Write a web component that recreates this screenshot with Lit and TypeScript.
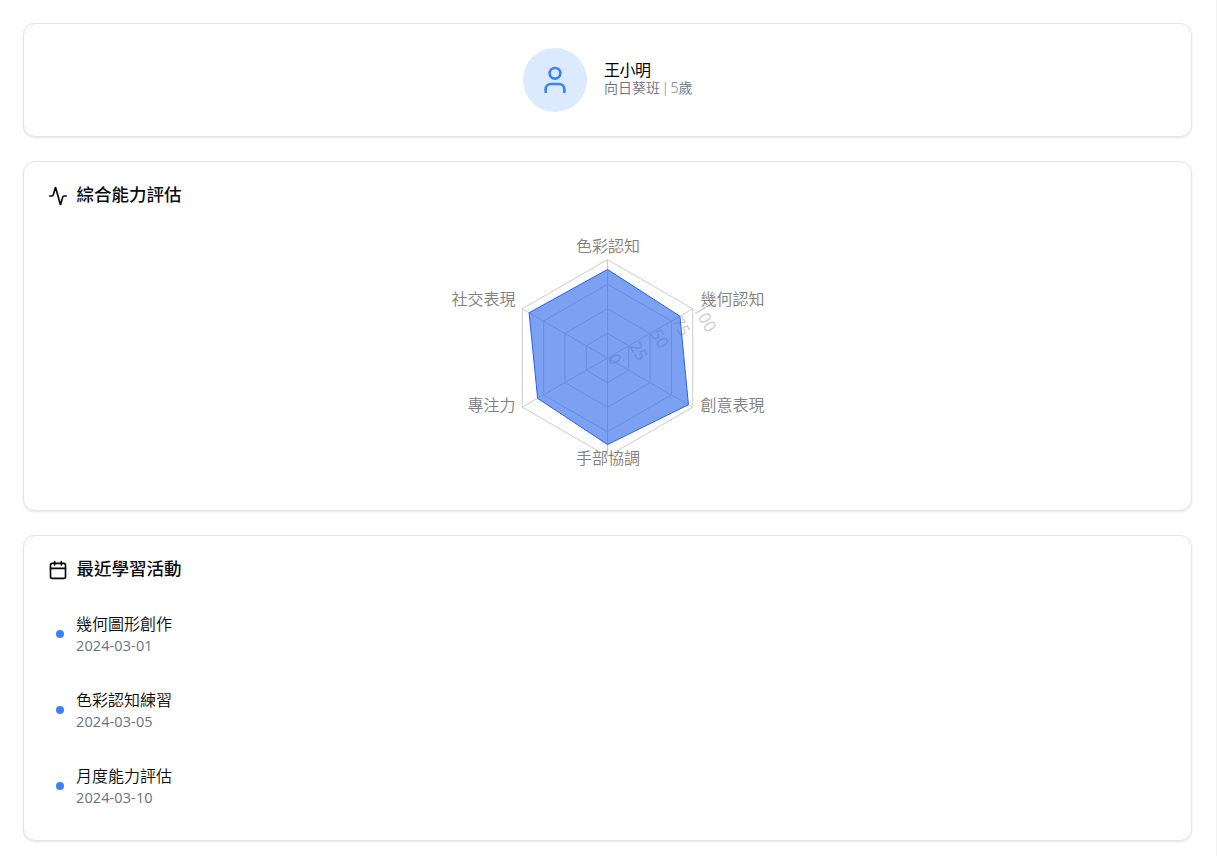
import { LitElement, html, svg, css } from "lit";
import { customElement } from "lit/decorators.js";

const SKILLS = [
  { name: "色彩認知", value: 90, x: 607.5, y: 251.5, anchor: "middle" },
  { name: "幾何認知", value: 85, x: 700, y: 304.5, anchor: "start" },
  { name: "創意表現", value: 95, x: 700, y: 410.5, anchor: "start" },
  { name: "手部協調", value: 88, x: 607.5, y: 463.5, anchor: "middle" },
  { name: "專注力", value: 82, x: 515, y: 410.5, anchor: "end" },
  { name: "社交表現", value: 92, x: 515, y: 304.5, anchor: "end" },
];
const ACTIVITIES = [
  { title: "幾何圖形創作", date: "2024-03-01" },
  { title: "色彩認知練習", date: "2024-03-05" },
  { title: "月度能力評估", date: "2024-03-10" },
];
const CX = 607;
const CY = 358;
const R = 98.4;
const point = (i: number, v: number) => {
  const a = (-90 + i * 60) * Math.PI / 180;
  const r = R * v / 100;
  return `${(CX + r * Math.cos(a)).toFixed(2)},${(CY + r * Math.sin(a)).toFixed(2)}`;
};
const ring = (v: number) => SKILLS.map((_, i) => point(i, v)).join(" ");

@customElement("app-root")
export class AppRoot extends LitElement {
  static styles = css`
    :host { display: block; box-sizing: border-box; width: 100%; height: 856px; overflow: hidden; background: #fff; border-right: 1px solid #f1f1f1; font-family: "Open Sans", "Noto Sans CJK TC", sans-serif; color: #09090b; }
    * { box-sizing: border-box; }
    .page { display: flex; flex-direction: column; gap: 24px; padding: 23px 24px 0 23px; }
    .card { border: 1px solid #e4e4e7; border-radius: 12px; background: #fff; box-shadow: 0 1px 2px rgba(0,0,0,.1); }
    .profile { height: 114px; display: flex; align-items: center; justify-content: center; gap: 17px; }
    .avatar { width: 64px; height: 64px; border-radius: 50%; background: #dbeafe; color: #3b82f6; display: flex; align-items: center; justify-content: center; }
    .name { font: 400 16px/19px "Noto Sans CJK TC", sans-serif; letter-spacing: -.5px; margin-top: -4px; color: #000; }
    .meta { width: 88px; font: 350 14px/18px "Open Sans", "Noto Sans CJK TC", sans-serif; color: #6b7280; white-space: nowrap; word-spacing: -2.2px; }
    .skills { height: 350px; }
    .recent { height: 306px; }
    .head { display: flex; align-items: center; gap: 8.5px; padding: 24px 24px 0; height: 44px; }
    .head h3 { margin: -4px 0 0; font: 500 17.5px/20px "Noto Sans CJK TC", sans-serif; }
    svg { display: block; flex: none; }
    .icon { fill: none; stroke: currentColor; stroke-width: 2; stroke-linecap: round; stroke-linejoin: round; }
    .chart { width: 340px; height: 256px; margin: 24px auto 0; }
    .grid { fill: none; stroke: #ccc; }
    .area { fill: #2563eb; fill-opacity: .6; stroke: #2563eb; }
    .label { font: 350 16px "Noto Sans CJK TC", sans-serif; fill: #808080; }
    .tick { font: 400 16.5px "Open Sans", sans-serif; fill: #ccc; }
    .list { padding: 24px 32px 0; display: flex; flex-direction: column; gap: 32px; margin-top: 8px; }
    .item { display: flex; align-items: center; gap: 12px; height: 44px; }
    .dot { width: 8px; height: 8px; border-radius: 50%; background: #3b82f6; }
    .title { font: 350 16px/22px "Noto Sans CJK TC", sans-serif; }
    .date { font: 400 14.5px/22px "Open Sans", sans-serif; color: #6b7280; letter-spacing: .1px; padding-top: 1px; margin-bottom: -1px; }
  `;
  render() {
    return html`<main class="page">
      <section class="card profile">
        <div class="avatar"><svg class="icon" width="32" height="32" viewBox="0 0 24 24"><circle cx="12" cy="7" r="4"/><path d="M19 21v-2a4 4 0 0 0-4-4H9a4 4 0 0 0-4 4v2"/></svg></div>
        <div><div class="name">王小明</div><div class="meta">向日葵班 | 5歲</div></div>
      </section>
      <section class="card skills">
        <div class="head"><svg class="icon" width="20" height="20" viewBox="0 0 24 24"><path d="M22 12h-2.48a2 2 0 0 0-1.93 1.46l-2.35 8.36a.25.25 0 0 1-.48 0L9.24 2.18a.25.25 0 0 0-.48 0l-2.35 8.36A2 2 0 0 1 4.49 12H2"/></svg><h3>綜合能力評估</h3></div>
        <svg class="chart" viewBox="437.5 230 340 256">
          ${[25, 50, 75, 100].map((v) => svg`<polygon class="grid" points=${ring(v)} />`)}
          ${SKILLS.map((_, i) => svg`<path class="grid" d="M${CX},${CY} L${point(i, 100)}" />`)}
          ${SKILLS.map((s) => svg`<text class="label" x=${s.x} y=${s.y} text-anchor=${s.anchor}>${s.name}</text>`)}
          ${[0, 25, 50, 75, 100].map((v) => {
            const [x, y] = point(1, v).split(",");
            return svg`<text class="tick" x=${x} y=${y} transform="rotate(60 ${x} ${y})">${v}</text>`;
          })}
          <polygon class="area" points=${SKILLS.map((s, i) => point(i, s.value)).join(" ")} />
        </svg>
      </section>
      <section class="card recent">
        <div class="head"><svg class="icon" width="20" height="20" viewBox="0 0 24 24"><path d="M8 2v4M16 2v4M3 10h18"/><rect x="3" y="4" width="18" height="18" rx="2"/></svg><h3>最近學習活動</h3></div>
        <div class="list">${ACTIVITIES.map((a) => html`<div class="item"><span class="dot"></span><div><div class="title">${a.title}</div><div class="date">${a.date}</div></div></div>`)}</div>
      </section>
    </main>`;
  }
}
